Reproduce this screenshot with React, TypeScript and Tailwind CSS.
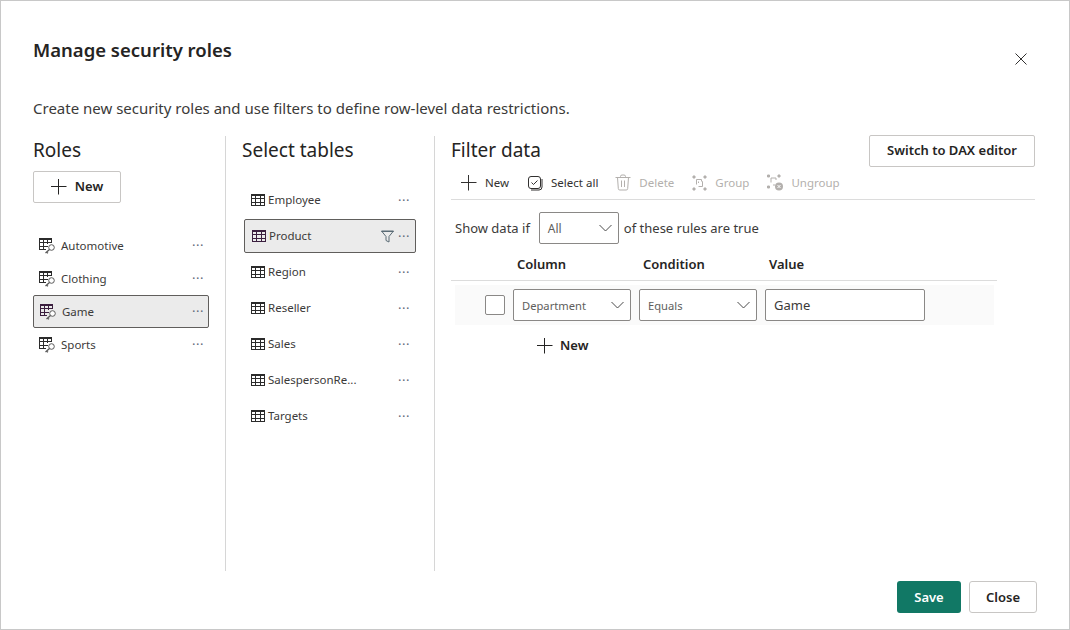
const FONT = "font-['Noto_Sans','Open_Sans',sans-serif]";

function PlusIcon({ color = "#252423" }: { color?: string }) {
  return (
    <svg width="16" height="16" viewBox="0 0 16 16" fill="none" stroke={color} className="shrink-0">
      <path d="M7.500 0v15.500M0 7.500h15.500" />
    </svg>
  );
}

function Chevron() {
  return (
    <svg width="13" height="8" viewBox="0 0 13 8" fill="none" stroke="#4a4a4a" className="ml-auto shrink-0">
      <path d="M.5 1l6 6 6-6" />
    </svg>
  );
}

function TableIcon({ selected = false }: { selected?: boolean }) {
  const c = selected ? "#3b1f3f" : "#2b2b2b";
  return (
    <svg width="16" height="16" viewBox="0 0 16 16" fill="none" stroke={c} strokeWidth="1" shapeRendering="crispEdges" className="shrink-0">
      <rect x="1.5" y="2.5" width="13" height="11" />
      <path d="M1.5 3.5h13M1.5 6.5h13M1.5 10.500h13M5.500 3v10M10.500 3v10" />
    </svg>
  );
}

function RoleIcon({ selected = false }: { selected?: boolean }) {
  const c = selected ? "#3b1f3f" : "#2b2b2b";
  return (
    <svg width="18" height="16" viewBox="0 0 18 16" fill="none" className="shrink-0">
      <path d="M8 11.500H1.500V.500h12V5M1.500 1.500h12M1.500 4.500h12M1.500 8h8M5.500 1v10M9.500 1v5" stroke={c} shapeRendering="crispEdges" />
      <circle cx="13.500" cy="9.500" r="2.800" fill="#fff" stroke="#5a5a5a" />
      <path d="M11.500 11.500l-4 3.500M9 14.500l1 .8" stroke="#5a5a5a" strokeWidth="1.300" />
    </svg>
  );
}

function Dots() {
  return <span className="text-[13px] leading-none tracking-[0.5px] text-[#5f6b7a]">···</span>;
}

function Role({ label, selected = false }: { label: string; selected?: boolean }) {
  return (
    <div className={`flex h-[33px] items-center rounded-[2px] pr-[4px] border ${selected ? "pl-[5px] border-[#605e5c] bg-[#ebebeb]" : "pl-[4px] border-transparent"}`}>
      <RoleIcon selected={selected} />
      <span className="ml-[5px] flex-1 text-[11.5px] text-[#3b3a39]">{label}</span>
      <Dots />
    </div>
  );
}

function TableRow({ label, selected = false }: { label: string; selected?: boolean }) {
  return (
    <div className={`flex h-[34px] items-center rounded-[2px] pr-[5px] border ${selected ? "pl-[6px] border-[#605e5c] bg-[#ebebeb]" : "pl-[5px] border-transparent"}`}>
      <TableIcon selected={selected} />
      <span className="ml-[2px] flex-1 text-[11.5px] text-[#3b3a39]">{label}</span>
      {selected && (
        <svg width="13" height="13" viewBox="0 0 13 13" fill="none" stroke="#5a6b75" className="mr-[4px]">
          <path d="M.5 1h12L8 6.500v5.500l-3-1.500v-4z" />
          <path d="M.5 1.500h12" />
        </svg>
      )}
      <Dots />
    </div>
  );
}

function ToolButton({ icon, label, disabled = false }: { icon: React.ReactNode; label: string; disabled?: boolean }) {
  return (
    <div className={`flex items-center gap-[8px] text-[11.5px] ${disabled ? "text-[#b3b0ad]" : "text-[#323130]"}`}>
      {icon}
      <span>{label}</span>
    </div>
  );
}

function Select({ label, width }: { label: string; width: string }) {
  return (
    <div className={`flex h-[32px] items-center rounded-[2px] border border-[#8a8886] bg-white pl-[8px] pr-[6px] text-[11.2px] text-[#605e5c] ${width}`}>
      <span className="pt-[2px]">{label}</span>
      <Chevron />
    </div>
  );
}

export default function App() {
  const tables = ["Employee", "Product", "Region", "Reseller", "Sales", "SalespersonRe...", "Targets"];
  return (
    <div className={`flex h-[630px] w-[1070px] flex-col border border-[#c8c8c8] bg-white text-[#252423] ${FONT}`}>
      <div className="flex items-start justify-between pl-[32px] pr-[41px] pt-[35px]">
        <h1 className="text-[18.5px] font-semibold leading-[27px] text-[#252423]">Manage security roles</h1>
        <svg width="12" height="12" viewBox="0 0 12 12" fill="none" stroke="#323130" className="mt-[17px] -mb-px -translate-x-px">
          <path d="M.5.500l11 11M11.500.500l-11 11" />
        </svg>
      </div>
      <p className="mt-[33px] pl-[32px] text-[15px] leading-[22px] text-[#3b3a39]">
        Create new security roles and use filters to define row-level data restrictions.
      </p>

      <div className="mt-[17px] flex h-[435px] pl-[32px] pr-[34px]">
        <section className="w-[193px] shrink-0 border-r border-[#d6d6d6] pr-[16px]">
          <h2 className="text-[19px] leading-[28px] text-[#252423]">Roles</h2>
          <div className="mt-[7px] flex h-[32px] w-[88px] items-center justify-center gap-[8px] rounded-[2px] border border-[#c8c6c4] text-[13px] font-semibold text-[#252423]">
            <PlusIcon />
            New
          </div>
          <div className="mt-[26px] flex flex-col">
            <Role label="Automotive" />
            <Role label="Clothing" />
            <Role label="Game" selected />
            <Role label="Sports" />
          </div>
        </section>

        <section className="w-[209px] shrink-0 border-r border-[#d6d6d6] pl-[16px] pr-[18px]">
          <h2 className="text-[19px] leading-[28px] text-[#252423]">Select tables</h2>
          <div className="mt-[19px] ml-[2px] flex flex-col gap-[2px]">
            {tables.map((t) => (
              <TableRow key={t} label={t} selected={t === "Product"} />
            ))}
          </div>
        </section>

        <section className="min-w-0 flex-1 pl-[16px]">
          <div className="flex items-start justify-between">
            <h2 className="text-[19px] leading-[28px] text-[#252423]">Filter data</h2>
            <div className="-mt-px flex h-[32px] w-[166px] items-center justify-center rounded-[2px] border border-[#c8c6c4] text-[13px] font-semibold text-[#252423]">
              Switch to DAX editor
            </div>
          </div>
          <div className="flex h-[33px] items-center gap-[18px] border-b border-[#dcdcdc] pl-[10px] pb-[1px]">
            <ToolButton icon={<PlusIcon color="#323130" />} label="New" />
            <ToolButton
              icon={
                <svg width="16" height="16" viewBox="0 0 16 16" fill="none" stroke="#323130">
                  <rect x="1.500" y="1.500" width="12" height="12" rx="2.500" />
                  <path d="M4.500 7.500l2 2 4-4M15 4v8a3 3 0 0 1-3 3H4" />
                </svg>
              }
              label="Select all"
            />
            <ToolButton
              disabled
              icon={
                <svg width="16" height="17" viewBox="0 0 16 17" fill="none" stroke="#b3b0ad" className="-ml-px">
                  <path d="M.5 3.500h15M5.500 3.500V2.500a1.500 1.500 0 0 1 1.500-1.500h2a1.500 1.500 0 0 1 1.500 1.500v1" />
                  <path d="M2.500 3.500l.8 11a1.500 1.500 0 0 0 1.500 1.500h6.400a1.500 1.500 0 0 0 1.500-1.500l.8-11M6.500 6.500v6.500M9.500 6.500v6.500" />
                </svg>
              }
              label="Delete"
            />
            <ToolButton
              disabled
              icon={
                <svg width="15" height="16" viewBox="0 0 15 16" fill="none" stroke="#b3b0ad">
                  <path d="M1 1h2v2H1zM12 1h2v2h-2zM1 13h2v2H1zM12 13h2v2h-2z" fill="#b3b0ad" />
                  <path d="M4.500 9.500v-5h5v1.500M6.500 8v-1.500M6.500 11.500h4v-5h-1" />
                </svg>
              }
              label="Group"
            />
            <ToolButton
              disabled
              icon={
                <svg width="16" height="17" viewBox="0 0 16 17" fill="none" stroke="#b3b0ad">
                  <path d="M.5 1h2v2h-2zM11 1h2v2h-2zM.5 12h2v2h-2z" fill="#b3b0ad" />
                  <path d="M4 8.500v-4.500h5v2M6 11h2" />
                  <circle cx="12" cy="12.500" r="4" fill="#b3b0ad" stroke="none" />
                  <path d="M10.500 11l3 3M13.500 11l-3 3" stroke="#fff" />
                </svg>
              }
              label="Ungroup"
            />
          </div>

          <div className="mt-[12px] flex items-center pl-[4px] text-[13px] text-[#3b3a39]">
            <span className="pt-[2px]">Show data if</span>
            <Select label="All" width="w-[80px] ml-[9px] !text-[12px]" />
            <span className="ml-[5px] pt-[2px]">of these rules are true</span>
          </div>

          <div className="mt-[6px] w-[546px] border-b border-[#dcdcdc]">
            <div className="flex h-[30px] items-center text-[13px] font-semibold text-[#252423]">
              <span className="ml-[66px] w-[126px]">Column</span>
              <span className="w-[126px]">Condition</span>
              <span>Value</span>
            </div>
          </div>
          <div className="mt-[4px] ml-[4px] flex h-[40px] w-[539px] items-center bg-[#fafafa] pl-[30px]">
            <div className="h-[20px] w-[20px] rounded-[2px] border border-[#8a8886] bg-white" />
            <Select label="Department" width="w-[118px] ml-[8px]" />
            <Select label="Equals" width="w-[118px] ml-[8px]" />
            <div className="ml-[8px] flex h-[32px] w-[160px] items-center rounded-[2px] border border-[#8a8886] bg-white pl-[8px] pt-[2px] text-[13px] text-[#3b3a39]">
              Game
            </div>
          </div>
          <div className="ml-[86px] mt-[11px] flex items-center gap-[7px] text-[13px] font-semibold text-[#252423]">
            <PlusIcon />
            New
          </div>
        </section>
      </div>

      <div className="mt-[10px] flex justify-end gap-[8px] pr-[32px]">
        <div className="flex h-[32px] w-[64px] items-center justify-center rounded-[3px] bg-[#117865] pt-px text-[13px] font-semibold text-white">
          Save
        </div>
        <div className="flex h-[32px] w-[68px] items-center justify-center rounded-[3px] border border-[#c8c6c4] pt-px text-[13px] font-semibold text-[#252423]">
          Close
        </div>
      </div>
    </div>
  );
}
